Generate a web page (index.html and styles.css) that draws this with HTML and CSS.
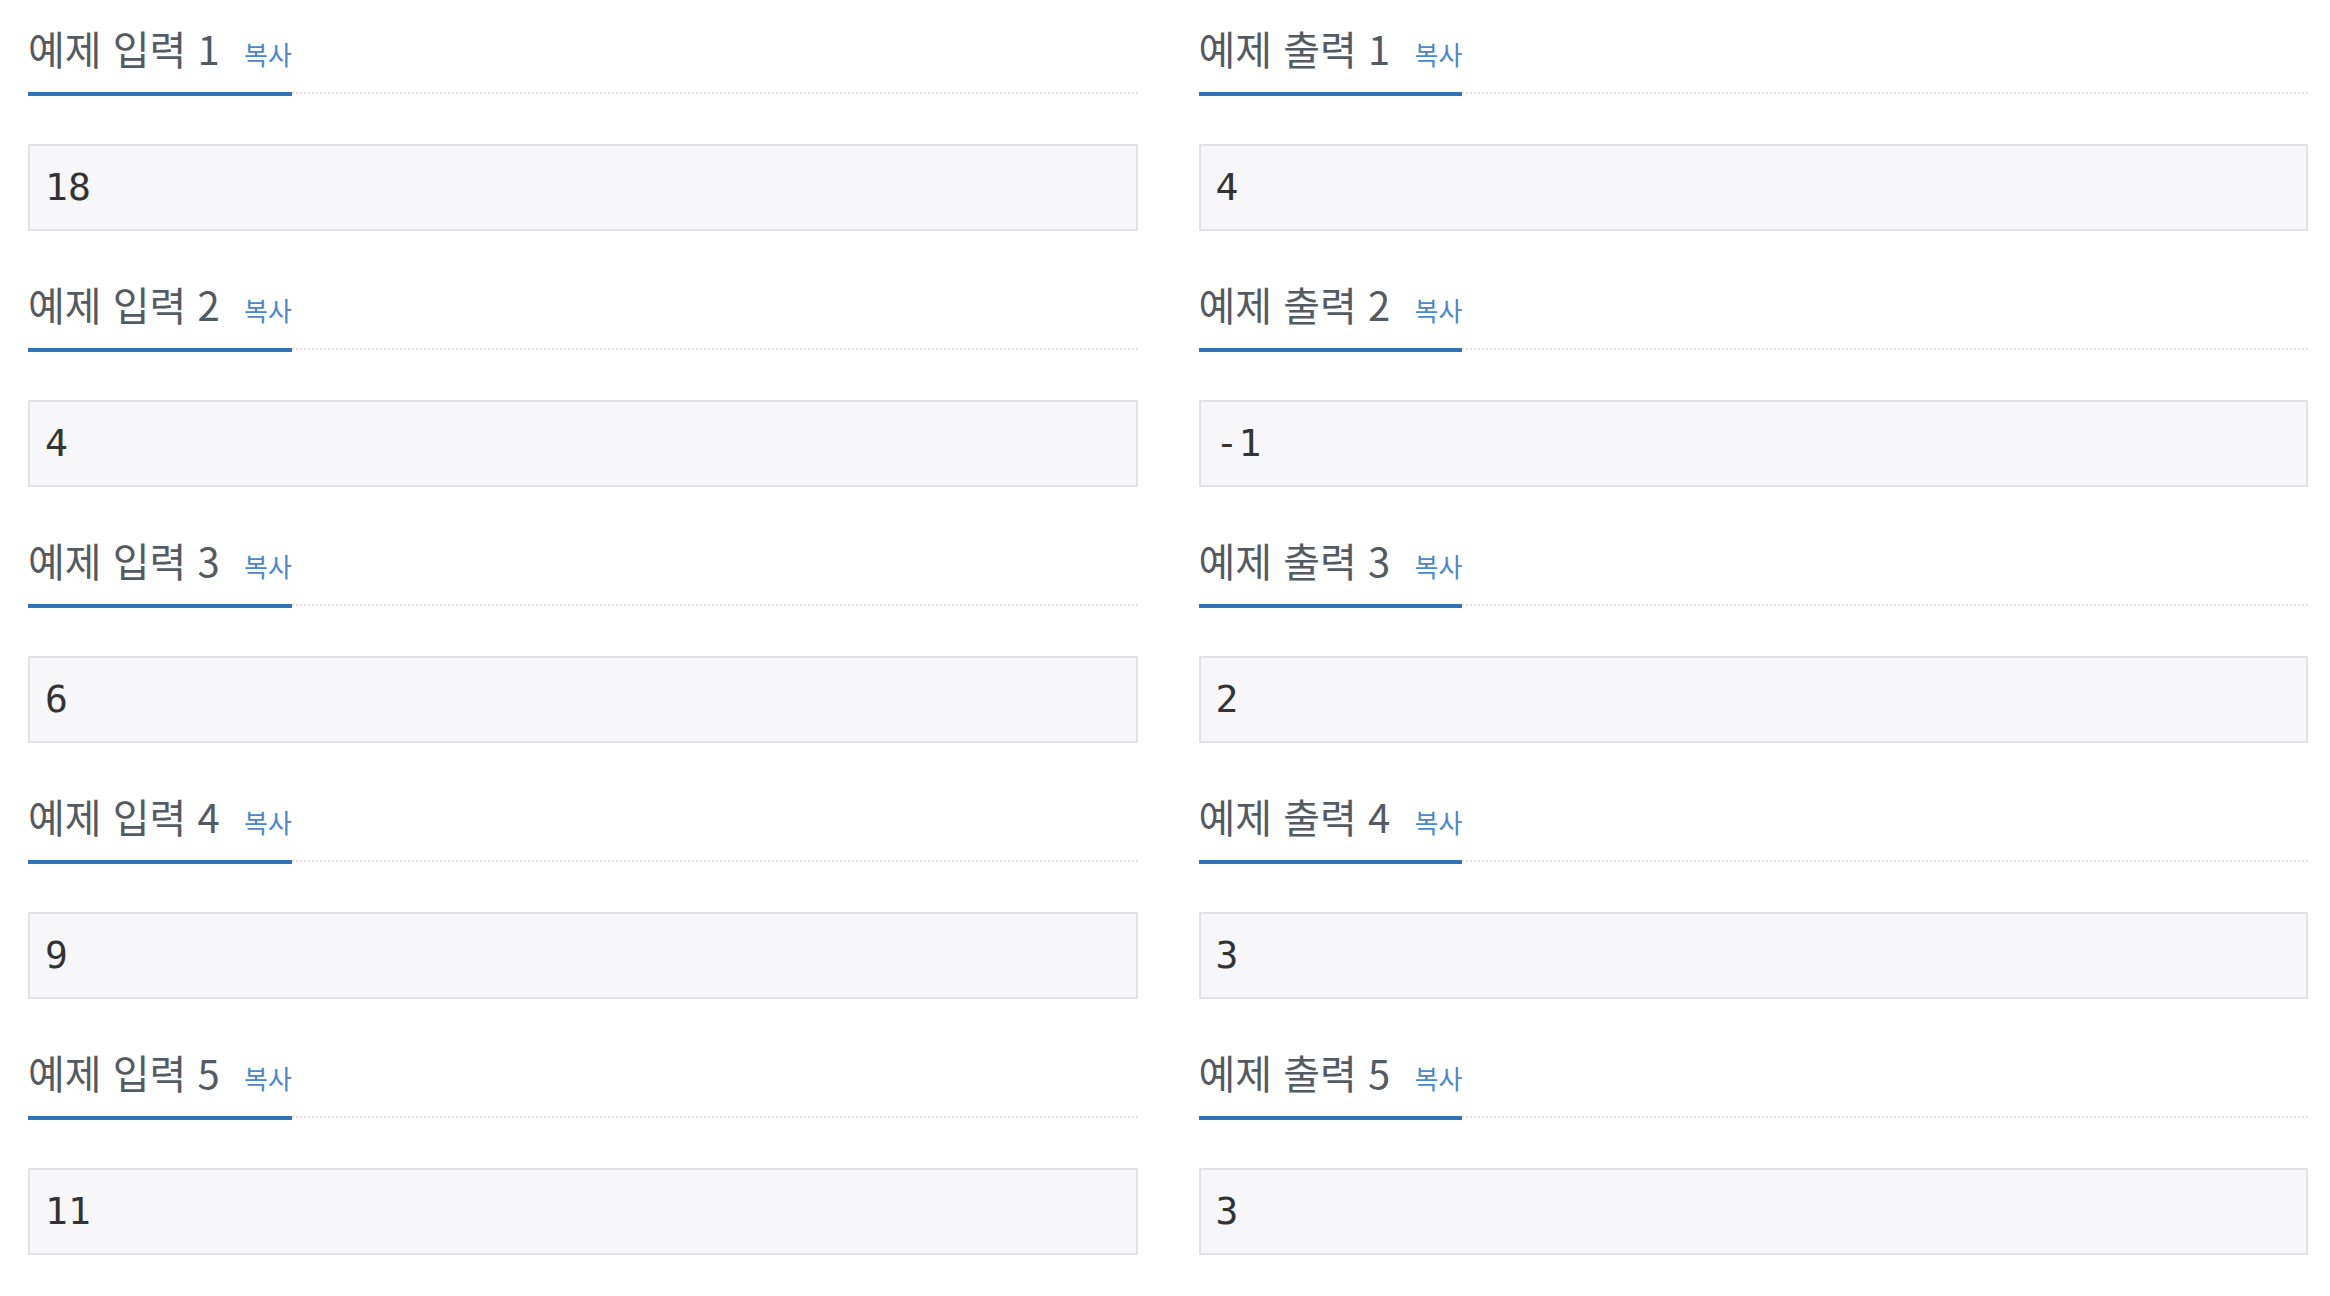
FILE: index.html
```html
<!DOCTYPE html>
<html lang="ko">
<head>
<meta charset="utf-8">
<title>예제</title>
<link rel="stylesheet" href="styles.css">
</head>
<body>
<div class="samples">
  <section class="sample">
    <h2 class="headline"><span class="title">예제 입력 1 <span class="copy">복사</span></span></h2>
    <pre class="data">18</pre>
  </section>
  <section class="sample">
    <h2 class="headline"><span class="title">예제 출력 1 <span class="copy">복사</span></span></h2>
    <pre class="data">4</pre>
  </section>
  <section class="sample">
    <h2 class="headline"><span class="title">예제 입력 2 <span class="copy">복사</span></span></h2>
    <pre class="data">4</pre>
  </section>
  <section class="sample">
    <h2 class="headline"><span class="title">예제 출력 2 <span class="copy">복사</span></span></h2>
    <pre class="data">-1</pre>
  </section>
  <section class="sample">
    <h2 class="headline"><span class="title">예제 입력 3 <span class="copy">복사</span></span></h2>
    <pre class="data">6</pre>
  </section>
  <section class="sample">
    <h2 class="headline"><span class="title">예제 출력 3 <span class="copy">복사</span></span></h2>
    <pre class="data">2</pre>
  </section>
  <section class="sample">
    <h2 class="headline"><span class="title">예제 입력 4 <span class="copy">복사</span></span></h2>
    <pre class="data">9</pre>
  </section>
  <section class="sample">
    <h2 class="headline"><span class="title">예제 출력 4 <span class="copy">복사</span></span></h2>
    <pre class="data">3</pre>
  </section>
  <section class="sample">
    <h2 class="headline"><span class="title">예제 입력 5 <span class="copy">복사</span></span></h2>
    <pre class="data">11</pre>
  </section>
  <section class="sample">
    <h2 class="headline"><span class="title">예제 출력 5 <span class="copy">복사</span></span></h2>
    <pre class="data">3</pre>
  </section>
</div>
</body>
</html>
```

FILE: styles.css
```css
html, body {
  margin: 0;
  padding: 0;
  background: #ffffff;
}

.samples {
  display: grid;
  grid-template-columns: 1fr 1fr;
  column-gap: 61px;
  row-gap: 46px;
  padding: 21px 22px 0 28px;
}

.sample {
  display: flex;
  flex-direction: column;
  min-width: 0;
}

.headline {
  display: flex;
  align-items: flex-end;
  margin: 0 0 50px 0;
  border-bottom: 2px dotted #e3e3ea;
  font-weight: normal;
}

.title {
  display: inline-block;
  margin-bottom: -4px;
  padding-bottom: 16px;
  border-bottom: 4px solid #3273b7;
  font-family: "Noto Sans CJK KR", "Noto Sans", sans-serif;
  font-size: 40px;
  line-height: 55px;
  font-weight: 400;
  color: #545a62;
  white-space: nowrap;
}

.copy {
  margin-left: 13px;
  font-size: 26px;
  line-height: 1;
  color: #4a88c8;
}

.data {
  margin: 0;
  padding: 19px 15px;
  border: 2px solid #e1e1e8;
  background: #f7f7f9;
  font-family: "DejaVu Sans Mono", "Liberation Mono", monospace;
  font-size: 38px;
  line-height: 45px;
  color: #333333;
}
```
